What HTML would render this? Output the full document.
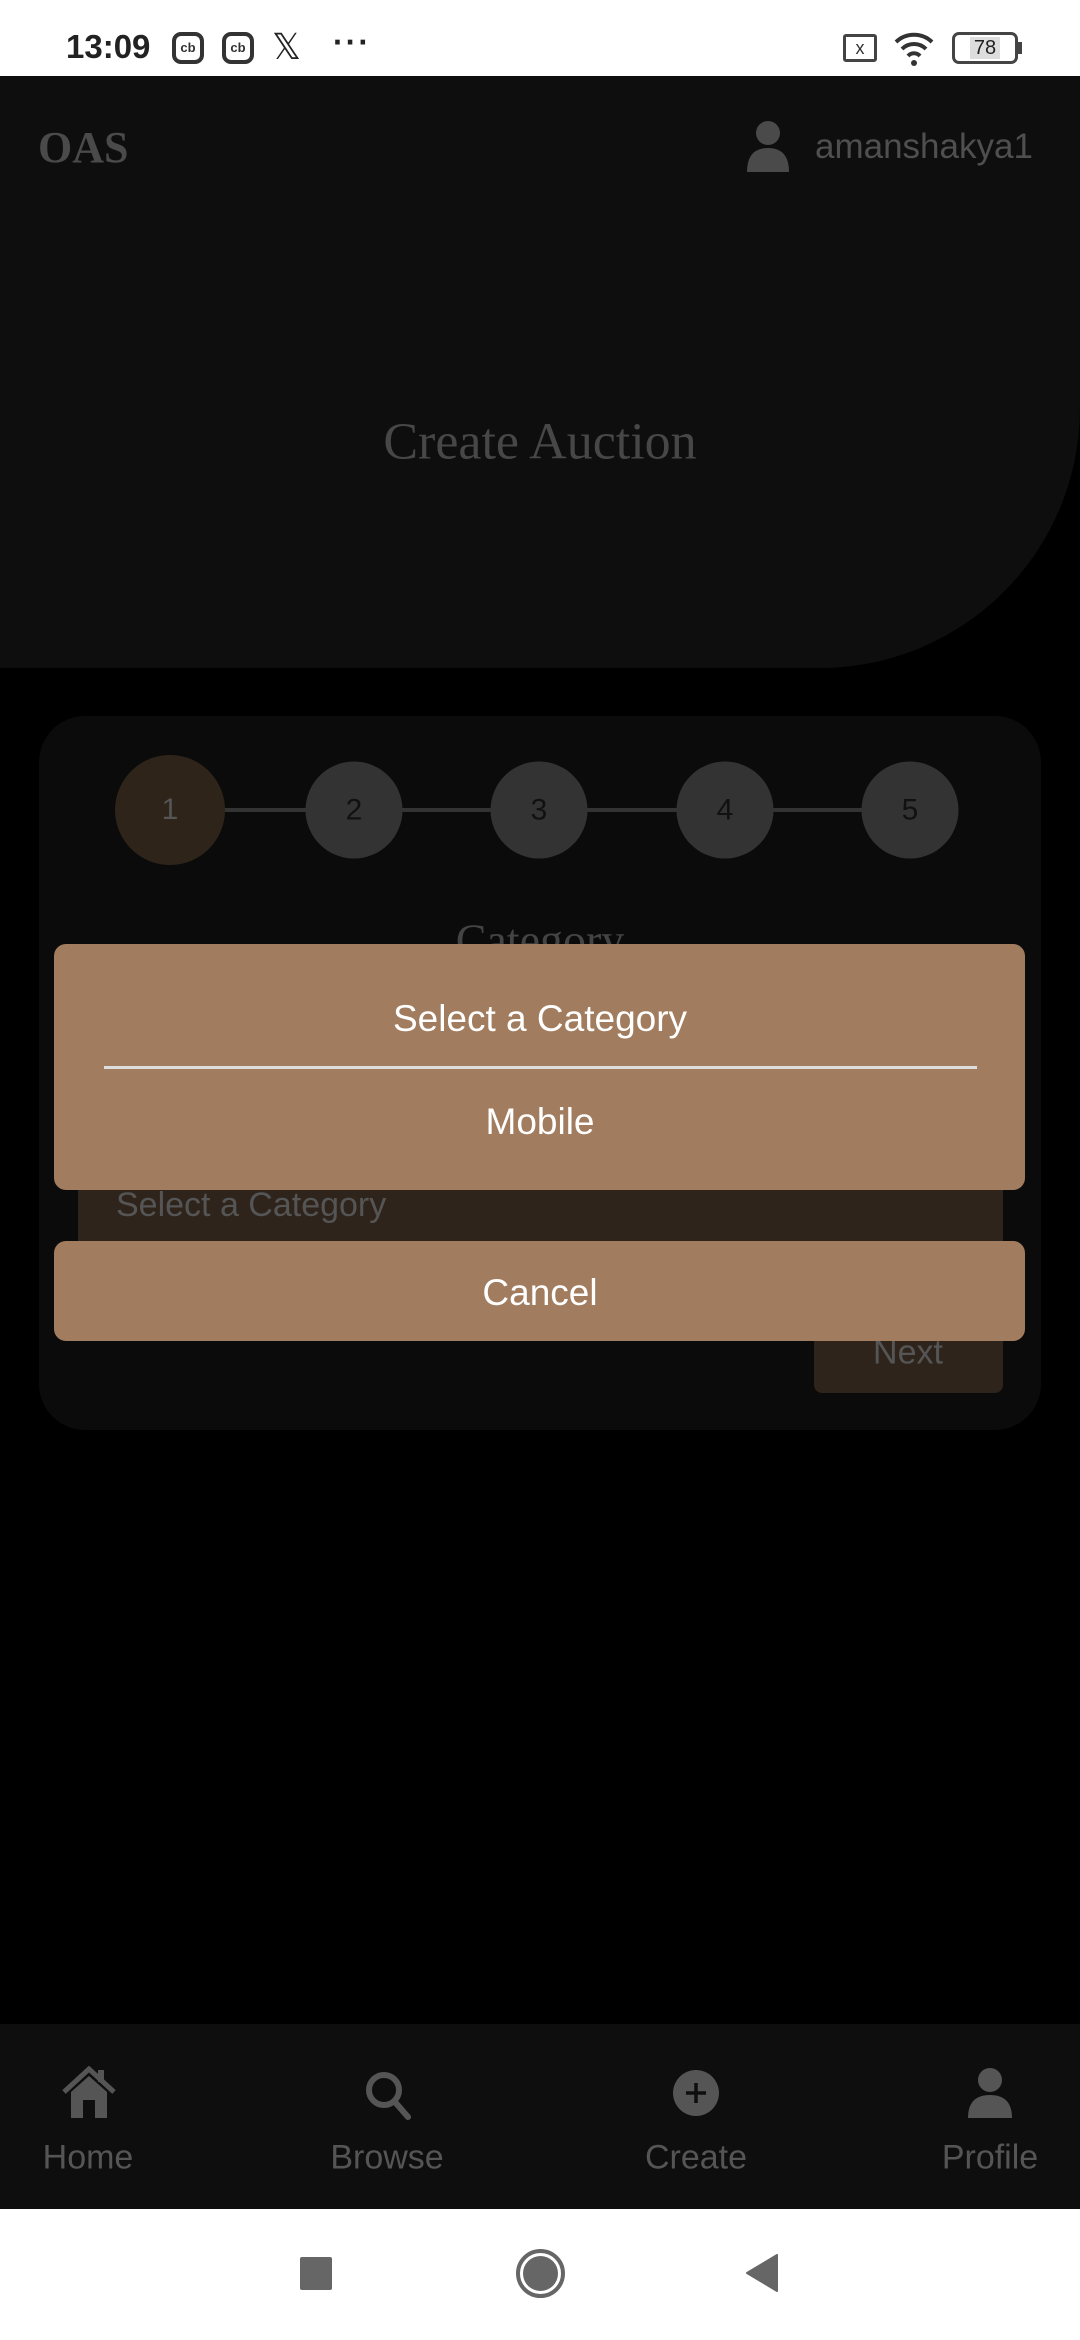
<!DOCTYPE html>
<html><head><meta charset="utf-8"><style>
*{margin:0;padding:0;box-sizing:border-box}
body{width:1080px;height:2340px;background:#000;position:relative;overflow:hidden;font-family:"Liberation Sans",sans-serif}
.a{position:absolute}
.c{position:absolute;text-align:center;transform:translate(-50%,-50%);white-space:nowrap}
.serif{font-family:"Liberation Serif",serif}
.circ{position:absolute;border-radius:50%;background:#333;transform:translate(-50%,-50%);display:flex;align-items:center;justify-content:center;font-size:30px;color:#111}
</style></head><body>
<div class="a" style="left:0;top:0;width:1080px;height:76px;background:#fff"></div>
<div class="a" style="left:66px;top:28px;font-size:33px;font-weight:bold;color:#222">13:09</div>
<div class="a" style="left:172px;top:32px;width:32px;height:32px;border:4px solid #333;border-radius:9px;font-size:13px;font-weight:bold;text-align:center;line-height:24px;color:#333">cb</div>
<div class="a" style="left:222px;top:32px;width:32px;height:32px;border:4px solid #333;border-radius:9px;font-size:13px;font-weight:bold;text-align:center;line-height:24px;color:#333">cb</div>
<div class="a" style="left:272px;top:26px;font-size:36px;color:#222">𝕏</div>
<div class="a" style="left:333px;top:24px;font-size:32px;font-weight:bold;color:#222;letter-spacing:2px">···</div>
<div class="a" style="left:843px;top:34px;width:34px;height:28px;border:3px solid #444;border-radius:3px;font-size:18px;text-align:center;line-height:22px;color:#333">x</div>
<svg class="a" style="left:892px;top:30px" width="44" height="38" viewBox="0 0 44 38"><path d="M4 12 A26 26 0 0 1 40 12" stroke="#333" stroke-width="4" fill="none"/><path d="M10 19 A17 17 0 0 1 34 19" stroke="#333" stroke-width="4" fill="none"/><path d="M16 26 A8 8 0 0 1 28 26" stroke="#333" stroke-width="4" fill="none"/><circle cx="22" cy="33" r="3" fill="#333"/></svg>
<div class="a" style="left:952px;top:32px;width:66px;height:32px;border:3px solid #444;border-radius:7px;font-size:20px;text-align:center;line-height:26px;color:#222"><span style="background:#ddd;padding:0 4px">78</span></div>
<div class="a" style="left:1018px;top:42px;width:4px;height:12px;background:#444"></div>
<div class="a" style="left:0;top:76px;width:1080px;height:592px;background:#0e0e0e;border-bottom-right-radius:260px"></div>
<div class="a serif" style="left:38px;top:122px;font-size:44px;font-weight:bold;color:#4a4a4a">OAS</div>
<svg class="a" style="left:745px;top:120px" width="46" height="52" viewBox="0 0 46 52"><circle cx="23" cy="13" r="12" fill="#4a4a4a"/><path d="M2 52 Q2 28 23 28 Q44 28 44 52Z" fill="#4a4a4a"/></svg>
<div class="a" style="left:815px;top:127px;font-size:35px;color:#4f4f4f">amanshakya1</div>
<div class="c serif" style="left:540px;top:442px;font-size:52px;color:#474747">Create Auction</div>
<div class="a" style="left:39px;top:716px;width:1002px;height:714px;background:#0b0b0b;border-radius:46px"></div>
<div class="a" style="left:170px;top:808px;width:740px;height:4px;background:#333"></div>
<div class="circ" style="left:170px;top:810px;width:110px;height:110px;background:#2e2419;color:#555">1</div>
<div class="circ" style="left:354px;top:810px;width:97px;height:97px">2</div>
<div class="circ" style="left:539px;top:810px;width:97px;height:97px">3</div>
<div class="circ" style="left:725px;top:810px;width:97px;height:97px">4</div>
<div class="circ" style="left:910px;top:810px;width:97px;height:97px">5</div>
<div class="c serif" style="left:540px;top:940px;font-size:46px;color:#444">Category</div>
<div class="a" style="left:78px;top:1180px;width:925px;height:70px;background:#2e241b"></div>
<div class="a" style="left:116px;top:1186px;font-size:34px;color:#555">Select a Category</div>
<div class="a" style="left:814px;top:1300px;width:189px;height:93px;background:#2e241b;border-radius:8px"></div>
<div class="c" style="left:908px;top:1353px;font-size:34px;color:#555">Next</div>
<div class="a" style="left:54px;top:944px;width:971px;height:246px;background:#a27c5e;border-radius:12px"></div>
<div class="c" style="left:540px;top:1019px;font-size:37px;color:#fff">Select a Category</div>
<div class="a" style="left:104px;top:1066px;width:873px;height:3px;background:#ddd"></div>
<div class="c" style="left:540px;top:1122px;font-size:37px;color:#fff">Mobile</div>
<div class="a" style="left:54px;top:1241px;width:971px;height:100px;background:#a27c5e;border-radius:12px"></div>
<div class="c" style="left:540px;top:1293px;font-size:37px;color:#fff">Cancel</div>
<div class="a" style="left:0;top:2024px;width:1080px;height:185px;background:#0e0e0e"></div>
<svg class="a" style="left:62px;top:2066px" width="54" height="52" viewBox="0 0 54 52"><path d="M2 26 L27 3 L52 26" stroke="#555" stroke-width="5" fill="none"/><path d="M9 26 L27 10 L45 26 V52 H33 V34 H21 V52 H9Z" fill="#555"/><rect x="36" y="4" width="6" height="12" fill="#555"/></svg>
<svg class="a" style="left:364px;top:2070px" width="48" height="50" viewBox="0 0 48 50"><circle cx="20" cy="20" r="15" stroke="#555" stroke-width="6" fill="none"/><path d="M31 32 L44 47" stroke="#555" stroke-width="6" stroke-linecap="round"/></svg>
<svg class="a" style="left:673px;top:2070px" width="46" height="46" viewBox="0 0 46 46"><circle cx="23" cy="23" r="23" fill="#555"/><path d="M23 13 V33 M13 23 H33" stroke="#0e0e0e" stroke-width="3.5"/></svg>
<svg class="a" style="left:967px;top:2068px" width="46" height="50" viewBox="0 0 46 50"><circle cx="23" cy="12" r="12" fill="#555"/><path d="M1 50 Q1 27 23 27 Q45 27 45 50Z" fill="#555"/></svg>
<div class="c" style="left:88px;top:2158px;font-size:34px;color:#555">Home</div>
<div class="c" style="left:387px;top:2158px;font-size:34px;color:#555">Browse</div>
<div class="c" style="left:696px;top:2158px;font-size:34px;color:#555">Create</div>
<div class="c" style="left:990px;top:2158px;font-size:34px;color:#555">Profile</div>
<div class="a" style="left:0;top:2209px;width:1080px;height:131px;background:#fff"></div>
<div class="a" style="left:300px;top:2257px;width:32px;height:33px;background:#666;border-radius:2px"></div>
<div class="a" style="left:516px;top:2249px;width:49px;height:49px;border:4px solid #666;border-radius:50%"></div>
<div class="a" style="left:523px;top:2256px;width:35px;height:35px;background:#666;border-radius:50%"></div>
<svg class="a" style="left:744px;top:2254px" width="34" height="38" viewBox="0 0 34 38"><path d="M33 1 V37 L3 19Z" fill="#666" stroke="#666" stroke-linejoin="round" stroke-width="2"/></svg>
</body></html>
